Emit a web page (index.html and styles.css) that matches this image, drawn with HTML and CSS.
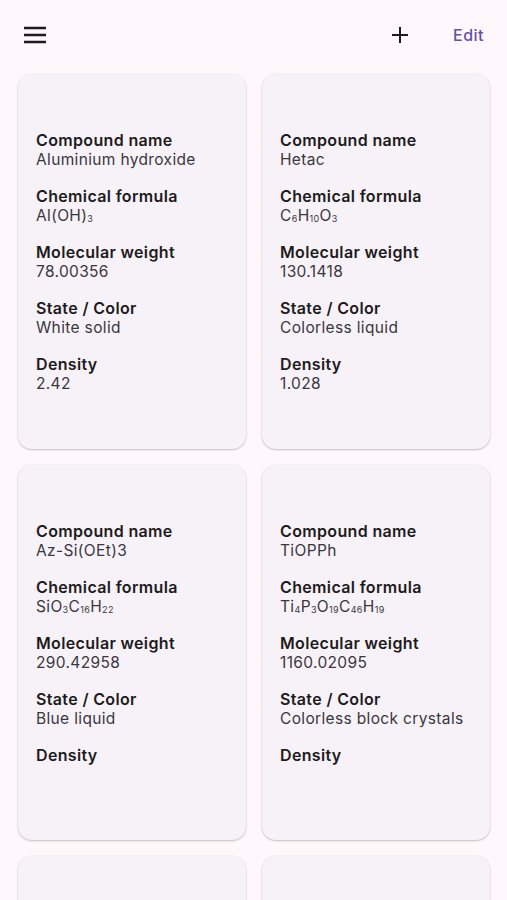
FILE: index.html
```html
<!DOCTYPE html>
<html lang="en">
  <head>
    <title>Compounds</title>
    <link rel="stylesheet" href="styles.css">
  </head>
  <body>
    <header class="topbar">
      <button class="icon-btn menu-btn" aria-label="Menu">
        <svg width="24" height="24" viewBox="0 0 24 24"><path d="M1 5h22M1 12h22M1 19h22" stroke="#1d1b20" stroke-width="2.4" fill="none"/></svg>
      </button>
      <div class="actions">
        <button class="icon-btn" aria-label="Add">
          <svg width="24" height="24" viewBox="0 0 24 24"><path d="M12 4v16M4 12h16" stroke="#1d1b20" stroke-width="2" fill="none"/></svg>
        </button>
        <button class="text-btn">Edit</button>
      </div>
    </header>

    <main class="grid">
      <div class="card">
        <div class="field"><div class="label">Compound name</div><div class="value">Aluminium hydroxide</div></div>
        <div class="field"><div class="label">Chemical formula</div><div class="value">Al(OH)<sub>3</sub></div></div>
        <div class="field"><div class="label">Molecular weight</div><div class="value">78.00356</div></div>
        <div class="field"><div class="label">State / Color</div><div class="value">White solid</div></div>
        <div class="field"><div class="label">Density</div><div class="value">2.42</div></div>
      </div>
      <div class="card">
        <div class="field"><div class="label">Compound name</div><div class="value">Hetac</div></div>
        <div class="field"><div class="label">Chemical formula</div><div class="value">C<sub>6</sub>H<sub>10</sub>O<sub>3</sub></div></div>
        <div class="field"><div class="label">Molecular weight</div><div class="value">130.1418</div></div>
        <div class="field"><div class="label">State / Color</div><div class="value">Colorless liquid</div></div>
        <div class="field"><div class="label">Density</div><div class="value">1.028</div></div>
      </div>
      <div class="card">
        <div class="field"><div class="label">Compound name</div><div class="value">Az-Si(OEt)3</div></div>
        <div class="field"><div class="label">Chemical formula</div><div class="value">SiO<sub>3</sub>C<sub>16</sub>H<sub>22</sub></div></div>
        <div class="field"><div class="label">Molecular weight</div><div class="value">290.42958</div></div>
        <div class="field"><div class="label">State / Color</div><div class="value">Blue liquid</div></div>
        <div class="field"><div class="label">Density</div></div>
      </div>
      <div class="card">
        <div class="field"><div class="label">Compound name</div><div class="value">TiOPPh</div></div>
        <div class="field"><div class="label">Chemical formula</div><div class="value">Ti<sub>4</sub>P<sub>3</sub>O<sub>19</sub>C<sub>46</sub>H<sub>19</sub></div></div>
        <div class="field"><div class="label">Molecular weight</div><div class="value">1160.02095</div></div>
        <div class="field"><div class="label">State / Color</div><div class="value">Colorless block crystals</div></div>
        <div class="field"><div class="label">Density</div></div>
      </div>
      <div class="card"></div>
      <div class="card"></div>
    </main>
  </body>
</html>
```

FILE: styles.css
```css
body {
  margin: 0;
  background-color: #fef8fd;
  font-family: "Inter", "Noto Sans", sans-serif;
  color: #1d1b20;
  overflow: hidden;
}

.topbar {
  height: 74px;
  display: flex;
  align-items: center;
  justify-content: space-between;
  padding: 0 23px 4px 23px;
  box-sizing: border-box;
}

.icon-btn {
  border: none;
  background: none;
  padding: 0;
  width: 24px;
  height: 24px;
  display: flex;
}

.actions {
  display: flex;
  align-items: center;
  gap: 41px;
}

.text-btn {
  border: none;
  background: none;
  padding: 0;
  font-family: inherit;
  font-size: 16px;
  font-weight: 500;
  color: #6750a4;
  letter-spacing: 0.5px;
}

.grid {
  display: grid;
  grid-template-columns: 228px 228px;
  gap: 16px;
  padding: 0 17px 0 18px;
}

.card {
  height: 375px;
  background-color: #f7f2f7;
  border-radius: 14px;
  box-shadow: 0 1px 2px rgba(0, 0, 0, 0.22), 0 0 0 1px rgba(0, 0, 0, 0.025);
  padding: 56px 18px 0 18px;
  box-sizing: border-box;
  display: flex;
  flex-direction: column;
  gap: 16px;
}

.label {
  font-size: 16px;
  font-weight: 600;
  line-height: 20px;
  letter-spacing: 0.35px;
  color: #1d1b20;
}

.value {
  font-size: 15.5px;
  line-height: 20px;
  letter-spacing: 0.35px;
  color: #3a373e;
}

sub {
  font-size: 9px;
  line-height: 0;
  vertical-align: baseline;
  position: relative;
  top: 1px;
}
```
